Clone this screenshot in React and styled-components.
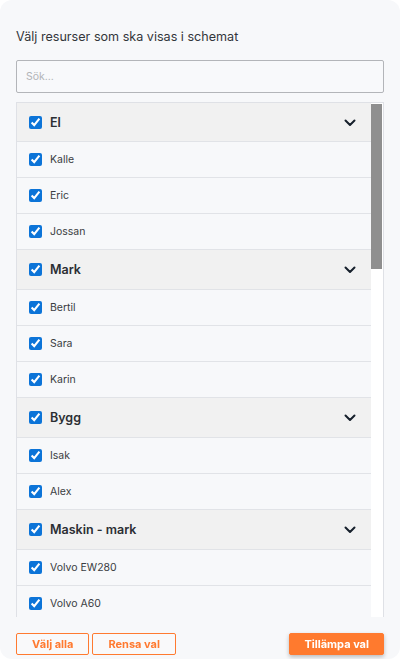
import React, { useState } from 'react';
import styled, { createGlobalStyle } from 'styled-components';

const GlobalStyle = createGlobalStyle`
	* { box-sizing: border-box; }
	html, body {
		margin: 0;
		padding: 0;
		background: #ffffff;
		font-family: Inter, "Noto Sans", "Liberation Sans", sans-serif;
	}
`;

const groups = [
	{ name: 'El', members: ['Kalle', 'Eric', 'Jossan'] },
	{ name: 'Mark', members: ['Bertil', 'Sara', 'Karin'] },
	{ name: 'Bygg', members: ['Isak', 'Alex'] },
	{ name: 'Maskin - mark', members: ['Volvo EW280', 'Volvo A60', 'Volvo L90', 'CAT 308', 'Hitachi ZX135'] },
	{ name: 'Maskin - bygg', members: ['Liebherr 35K', 'Manitou MT1840', 'Genie Z-45'] },
	{ name: 'Fordon', members: ['Scania R500', 'Volvo FH16', 'VW Crafter', 'Ford Transit'] },
	{ name: 'Inhyrda', members: ['Ramirent', 'Cramo', 'Kranpunkten', 'Tommy'] },
	{ name: 'Kontor', members: ['Lena', 'Peter', 'Anna'] },
];

const Chevron = () => (
	<svg width="12" height="8" viewBox="0 0 12 8" fill="none">
		<path d="M1.5 1.5L6 6L10.5 1.5" stroke="#17202c" strokeWidth="2" strokeLinecap="round" strokeLinejoin="round" />
	</svg>
);

const App = () => {
	const [checked, setChecked] = useState(() => {
		const all = {};
		groups.forEach((g) => {
			all[g.name] = true;
			g.members.forEach((m) => { all[g.name + '/' + m] = true; });
		});
		return all;
	});

	const toggle = (key) => setChecked((c) => ({ ...c, [key]: !c[key] }));

	return (
		<>
			<GlobalStyle />
			<S.Panel>
				<S.Title>Välj resurser som ska visas i schemat</S.Title>
				<S.Search placeholder='Sök...' />
				<S.ListFrame>
					<S.List>
						{groups.map((g) => (
							<React.Fragment key={g.name}>
								<S.Row $header>
									<S.Check type='checkbox' checked={!!checked[g.name]} onChange={() => toggle(g.name)} />
									<S.Label $header>{g.name}</S.Label>
									<S.Toggle><Chevron /></S.Toggle>
								</S.Row>
								{g.members.map((m) => (
									<S.Row key={m}>
										<S.Check type='checkbox' checked={!!checked[g.name + '/' + m]} onChange={() => toggle(g.name + '/' + m)} />
										<S.Label>{m}</S.Label>
									</S.Row>
								))}
							</React.Fragment>
						))}
					</S.List>
					<S.Track>
						<S.Thumb />
					</S.Track>
				</S.ListFrame>
				<S.Footer>
					<S.Button>Välj alla</S.Button>
					<S.Button>Rensa val</S.Button>
					<S.Spacer />
					<S.Button $primary>Tillämpa val</S.Button>
				</S.Footer>
			</S.Panel>
		</>
	);
};

export default App;

const S = {};
S.Panel = styled.section`
	width: 400px;
	height: 659px;
	background: #f7f8fa;
	border-radius: 12px;
	padding: 29px 16px 4px;
	display: flex;
	flex-direction: column;
`;

S.Title = styled.h1`
	margin: 0 0 15px;
	font-size: 12.6px;
	line-height: 16px;
	font-weight: 400;
	color: #33363b;
`;

S.Search = styled.input`
	height: 33px;
	width: 100%;
	border: 1px solid #b3b5b9;
	border-radius: 2px;
	background: #f8f9fb;
	padding: 0 9px;
	font-family: inherit;
	font-size: 10.5px;
	color: #333;
	outline: none;
	margin-bottom: 9px;
	&::placeholder {
		color: #b2b4b8;
	}
`;

S.ListFrame = styled.div`
	display: flex;
	height: 515px;
	border: 1px solid #dfe1e6;
	border-bottom: none;
	background: #f7f8fa;
`;

S.List = styled.div`
	flex: 1;
	overflow-y: auto;
	scrollbar-width: none;
	&::-webkit-scrollbar {
		display: none;
	}
`;

S.Track = styled.div`
	width: 12px;
	flex-shrink: 0;
	background: #ffffff;
	padding: 1px 1px 0 0;
`;

S.Thumb = styled.div`
	height: 165px;
	background: #8f8f8f;
`;

S.Row = styled.div`
	display: flex;
	align-items: center;
	height: ${(p) => (p.$header ? '40px' : '36px')};
	padding: 0 15px 0 12px;
	border-bottom: 1px solid #e1e3e7;
	background: ${(p) => (p.$header ? '#f1f1f1' : '#f7f8fa')};
	&:first-child {
		height: 39px;
	}
`;

S.Check = styled.input`
	width: 13px;
	height: 13px;
	margin: 0 8px 0 0;
	accent-color: #0c74d8;
	flex-shrink: 0;
`;

S.Label = styled.span`
	flex: 1;
	font-size: ${(p) => (p.$header ? '12.5px' : '10.5px')};
	font-weight: ${(p) => (p.$header ? 600 : 400)};
	color: ${(p) => (p.$header ? '#2b2e33' : '#3a3d42')};
`;

S.Toggle = styled.span`
	display: flex;
	align-items: center;
	padding-top: 1px;
`;

S.Footer = styled.div`
	display: flex;
	align-items: center;
	gap: 3px;
	margin-top: 16px;
`;

S.Spacer = styled.div`
	flex: 1;
`;

S.Button = styled.button`
	height: 22px;
	padding: 0 ${(p) => (p.$primary ? '14px' : '15px')};
	min-width: ${(p) => (p.$primary ? '94px' : '72px')};
	border: 1px solid #ff7a30;
	border-radius: 2px;
	background: ${(p) => (p.$primary ? '#ff7a2e' : '#f9f9fa')};
	color: ${(p) => (p.$primary ? '#ffffff' : '#ff7a30')};
	font-family: inherit;
	font-size: 11px;
	font-weight: 700;
	cursor: pointer;
	box-shadow: ${(p) => (p.$primary ? '0 2px 4px rgba(0,0,0,.25)' : 'none')};
`;
